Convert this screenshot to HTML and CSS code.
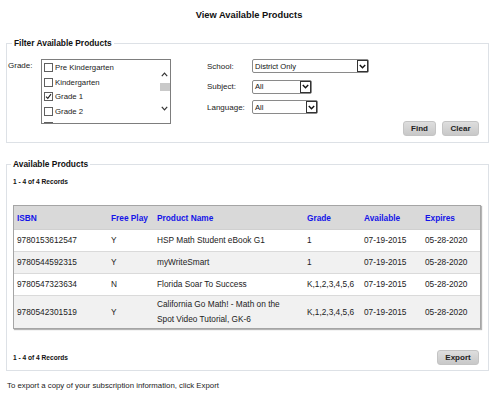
FILE: index.html
```html
<!DOCTYPE html>
<html>
<head>
<meta charset="utf-8">
<link rel="stylesheet" href="styles.css">
</head>
<body>
<h1 class="title">View Available Products</h1>

<fieldset class="panel filter">
  <legend>Filter Available Products</legend>
  <div class="filter-body">
    <div class="grade">
      <span class="lbl grade-lbl">Grade:</span>
      <div class="listbox">
        <ul class="options">
          <li><span class="cb"></span>Pre Kindergarten</li>
          <li><span class="cb"></span>Kindergarten</li>
          <li><span class="cb checked"><svg viewBox="0 0 7 7" width="7" height="7"><polyline points="1,3.6 2.8,5.4 6,1.2" fill="none" stroke="#222" stroke-width="1.1"/></svg></span>Grade 1</li>
          <li><span class="cb"></span>Grade 2</li>
          <li><span class="cb"></span>Grade 3</li>
        </ul>
        <div class="vscroll">
          <svg class="sarrow up" viewBox="0 0 7 5" width="7" height="5"><polyline points="0.8,4.2 3.5,1.2 6.2,4.2" fill="none" stroke="#333" stroke-width="1.2"/></svg>
          <span class="thumb"></span>
          <svg class="sarrow down" viewBox="0 0 7 5" width="7" height="5"><polyline points="0.8,0.8 3.5,3.8 6.2,0.8" fill="none" stroke="#333" stroke-width="1.2"/></svg>
        </div>
      </div>
    </div>
    <div class="fields">
      <div class="row">
        <span class="lbl">School:</span>
        <div class="select w-school"><span class="val">District Only</span><span class="arrow"><svg viewBox="0 0 7 5" width="7" height="5"><polyline points="0.8,1 3.5,3.8 6.2,1" fill="none" stroke="#111" stroke-width="1.4"/></svg></span></div>
      </div>
      <div class="row">
        <span class="lbl">Subject:</span>
        <div class="select w-subject"><span class="val">All</span><span class="arrow"><svg viewBox="0 0 7 5" width="7" height="5"><polyline points="0.8,1 3.5,3.8 6.2,1" fill="none" stroke="#111" stroke-width="1.4"/></svg></span></div>
      </div>
      <div class="row">
        <span class="lbl">Language:</span>
        <div class="select w-lang"><span class="val">All</span><span class="arrow"><svg viewBox="0 0 7 5" width="7" height="5"><polyline points="0.8,1 3.5,3.8 6.2,1" fill="none" stroke="#111" stroke-width="1.4"/></svg></span></div>
      </div>
      <div class="actions">
        <button class="btn w-find">Find</button>
        <button class="btn w-clear">Clear</button>
      </div>
    </div>
  </div>
</fieldset>

<fieldset class="panel products">
  <legend>Available Products</legend>
  <p class="records">1 - 4 of 4 Records</p>
  <table class="grid">
    <colgroup>
      <col class="c-isbn"><col class="c-free"><col class="c-name"><col class="c-grade"><col class="c-avail"><col class="c-exp">
    </colgroup>
    <thead>
      <tr><th>ISBN</th><th>Free Play</th><th>Product Name</th><th>Grade</th><th>Available</th><th>Expires</th></tr>
    </thead>
    <tbody>
      <tr><td>9780153612547</td><td>Y</td><td class="name">HSP Math Student eBook G1</td><td>1</td><td>07-19-2015</td><td>05-28-2020</td></tr>
      <tr class="alt"><td>9780544592315</td><td>Y</td><td class="name">myWriteSmart</td><td>1</td><td>07-19-2015</td><td>05-28-2020</td></tr>
      <tr><td>9780547323634</td><td>N</td><td class="name">Florida Soar To Success</td><td>K,1,2,3,4,5,6</td><td>07-19-2015</td><td>05-28-2020</td></tr>
      <tr class="alt last"><td>9780542301519</td><td>Y</td><td class="name">California Go Math! - Math on the Spot Video Tutorial, GK-6</td><td>K,1,2,3,4,5,6</td><td>07-19-2015</td><td>05-28-2020</td></tr>
    </tbody>
  </table>
  <div class="bottom-bar">
    <p class="records">1 - 4 of 4 Records</p>
    <button class="btn w-export">Export</button>
  </div>
</fieldset>

<p class="footer-note">To export a copy of your subscription information, click Export</p>
</body>
</html>
```

FILE: styles.css
```css
html, body {
  margin: 0;
  padding: 0;
  background: #ffffff;
}

body {
  font-family: "Liberation Sans", Arial, sans-serif;
  font-size: 8px;
  color: #1e1e1e;
  width: 498px;
}

.title {
  margin: 0;
  padding-top: 10px;
  font-size: 9.3px;
  line-height: 10px;
  font-weight: bold;
  text-align: center;
  color: #111;
}

.panel {
  margin: 0 9px 0 6px;
  padding: 0;
  border: 1px solid #dde1e6;
  min-width: 0;
}

.panel legend {
  margin-left: 4px;
  padding: 0 2px;
  font-size: 8.4px;
  line-height: 10px;
  font-weight: bold;
  color: #111;
}

.filter {
  margin-top: 18px;
  padding: 11px 9px 6px 1px;
}

.filter-body {
  display: flex;
  align-items: flex-start;
  gap: 36px;
}

.grade {
  display: flex;
  align-items: flex-start;
}

.lbl {
  color: #222;
  font-size: 8px;
}

.grade-lbl {
  width: 33px;
  line-height: 14px;
}

.listbox {
  display: flex;
  width: 130px;
  height: 65px;
  box-sizing: border-box;
  border: 1px solid #7d7d7d;
  overflow: hidden;
  background: #fff;
}

.options {
  flex: 1;
  list-style: none;
  margin: 0;
  padding: 0 0 0 2px;
}

.options li {
  display: flex;
  align-items: center;
  height: 14.7px;
  font-size: 7.8px;
  color: #222;
  white-space: nowrap;
}

.cb {
  display: inline-flex;
  width: 7px;
  height: 7px;
  border: 1px solid #5f5f5f;
  margin-right: 2px;
  background: #fff;
  flex: none;
}

.cb svg {
  display: block;
}

.vscroll {
  width: 11px;
  display: flex;
  flex-direction: column;
  align-items: center;
}

.sarrow {
  display: block;
  flex: none;
}

.sarrow.up {
  margin-top: 12px;
}

.thumb {
  display: block;
  width: 10px;
  height: 8px;
  margin-top: 6px;
  background: #c9c9c9;
}

.sarrow.down {
  margin-top: 15px;
}

.fields {
  flex: 1;
  display: flex;
  flex-direction: column;
}

.row {
  display: flex;
  align-items: center;
  height: 14px;
  margin-bottom: 6.5px;
}

.row .lbl {
  width: 45px;
  flex: none;
}

.select {
  display: flex;
  align-items: center;
  justify-content: space-between;
  box-sizing: border-box;
  height: 14px;
  border: 1px solid #8a8a8a;
  border-radius: 2px;
  background: #fff;
}

.select .val {
  padding-left: 2px;
  font-size: 7.6px;
  color: #111;
}

.select .arrow {
  display: flex;
  align-items: center;
  justify-content: center;
  box-sizing: border-box;
  width: 11px;
  height: 12px;
  border: 1px solid #333;
  margin-right: 0;
  background: #fff;
}

.w-school { width: 117px; }
.w-subject { width: 60px; }
.w-lang { width: 66px; }

.actions {
  display: flex;
  justify-content: flex-end;
  gap: 6px;
  margin-top: 0.5px;
}

.btn {
  box-sizing: border-box;
  height: 15px;
  padding: 0;
  border: 1px solid #c4c4c4;
  border-radius: 3px;
  background: linear-gradient(#dedede, #c8c8c8);
  font-family: "Liberation Sans", Arial, sans-serif;
  font-size: 8px;
  font-weight: bold;
  color: #222;
  line-height: 13px;
}

.w-find { width: 33px; }
.w-clear { width: 37px; }
.w-export { width: 42px; margin-right: 2px; }

.products {
  margin-top: 16px;
  padding: 8px 7px 5px 6px;
}

.products legend {
  margin-left: -2px;
}

.records {
  margin: 0;
  font-size: 6.6px;
  line-height: 9px;
  font-weight: bold;
  color: #111;
}

.grid {
  margin-top: 19px;
  width: 468px;
  table-layout: fixed;
  border-collapse: separate;
  border-spacing: 0;
  border: 1px solid #a5a5a5;
  box-shadow: 1px 1px 1px #b5b5b5;
  font-size: 8.3px;
}

.c-isbn { width: 94px; }
.c-free { width: 46px; }
.c-name { width: 150px; }
.c-grade { width: 57px; }
.c-avail { width: 61px; }
.c-exp { width: 58px; }

.grid th {
  height: 24px;
  padding: 0 2px 0 3px;
  box-sizing: border-box;
  background: #d9d9d9;
  border-bottom: 1px solid #d0d0d0;
  color: #1414e8;
  font-weight: bold;
  text-align: left;
  white-space: nowrap;
}

.grid td {
  height: 22px;
  box-sizing: border-box;
  padding: 1px 2px 1px 3px;
  line-height: 15px;
  color: #222;
  border-bottom: 1px solid #dadada;
  white-space: nowrap;
  vertical-align: middle;
}

.grid td.name {
  white-space: normal;
  padding-right: 8px;
}

.grid tr.alt td {
  background: #f1f1f1;
}

.grid tr.last td {
  border-bottom: none;
}

.bottom-bar {
  display: flex;
  align-items: center;
  justify-content: space-between;
  margin-top: 21px;
  height: 15px;
}

.footer-note {
  margin: 10px 0 0 7px;
  font-size: 7.8px;
  line-height: 10px;
  color: #222;
}
```
